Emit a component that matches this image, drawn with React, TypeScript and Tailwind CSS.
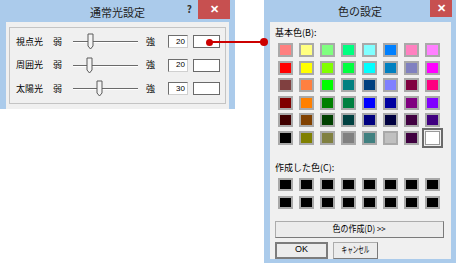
import React from "react";

const jp = { fontFamily: '"Noto Sans CJK JP", "Noto Sans", sans-serif' };

const basicColors = [
  "#ff8080", "#ffff80", "#80ff80", "#00ff80", "#80ffff", "#0080ff", "#ff80c0", "#ff80ff",
  "#ff0000", "#ffff00", "#80ff00", "#00ff40", "#00ffff", "#0080c0", "#8080c0", "#ff00ff",
  "#804040", "#ff8040", "#00ff00", "#008080", "#004080", "#8080ff", "#800040", "#ff0080",
  "#800000", "#ff8000", "#008000", "#008040", "#0000ff", "#0000a0", "#800080", "#8000ff",
  "#400000", "#804000", "#004000", "#004040", "#000080", "#000040", "#400040", "#400080",
  "#000000", "#808000", "#808040", "#808080", "#408080", "#c0c0c0", "#400040", "#ffffff",
];

const lights = [
  { label: "視点光", value: 20, pos: 15 },
  { label: "周囲光", value: 20, pos: 14 },
  { label: "太陽光", value: 30, pos: 24 },
];

function Slider({ pos }: { pos: number }) {
  return (
    <svg width="65" height="17" viewBox="0 0 65 17">
      <line x1="0" y1="8.5" x2="65" y2="8.5" stroke="#6a6a6a" strokeWidth="1" />
      <line x1="0" y1="9.5" x2="65" y2="9.5" stroke="#ffffff" strokeWidth="1" />
      <polygon
        points={`${pos},1 ${pos + 5},1 ${pos + 5},13 ${pos + 2.5},16 ${pos},13`}
        fill="#f4f4f4"
        stroke="#5a5a5a"
        strokeWidth="1"
      />
    </svg>
  );
}

function CloseButton({ w, h }: { w: string; h: string }) {
  return (
    <div className={`${w} ${h} bg-[#c75050] flex items-center justify-center text-white text-[11px] font-bold`}>
      ✕
    </div>
  );
}

function LightDialog() {
  return (
    <div className="w-[235px] h-[109px] bg-[#abcbeb] flex flex-col">
      <div className="h-[22px] relative flex items-center justify-center shrink-0">
        <span className="text-[11px] text-[#222] pt-[3px]" style={jp}>通常光設定</span>
        <div className="absolute right-[5px] top-0 flex items-start">
          <span className="text-[10px] font-bold text-[#333] mr-[6px] mt-[1px]" style={jp}>?</span>
          <CloseButton w="w-[32px]" h="h-[19px]" />
        </div>
      </div>
      <div className="flex-1 mx-[6px] bg-[#f0f0f0] pt-[5px] px-[3px]">
        <div className="h-[77px] border border-[#c4c4c4] pt-[7px] pl-[6px] flex flex-col gap-[10.5px]">
          {lights.map((l) => (
            <div key={l.label} className="h-[13px] flex items-center text-[9px] text-black" style={jp}>
              <span className="w-[37px]">{l.label}</span>
              <span className="w-[20px]">弱</span>
              <div className="w-[65px] h-[17px] flex items-center">
                <Slider pos={l.pos} />
              </div>
              <span className="w-[22px] ml-[8px]">強</span>
              <div
                className="w-[20px] h-[13px] bg-white border border-[#6e6e6e] border-b-[#d0d0d0] border-r-[#d0d0d0] flex items-center justify-end pr-[2px] text-[8px]"
                style={{ fontFamily: '"Liberation Sans", sans-serif' }}
              >
                {l.value}
              </div>
              <div className="w-[27px] h-[13px] ml-[5px] bg-white border border-[#6a6a6a]" />
            </div>
          ))}
        </div>
      </div>
    </div>
  );
}

function ColorDialog() {
  return (
    <div className="w-[192px] h-[263px] ml-[29px] bg-[#abcbeb] flex flex-col">
      <div className="h-[22px] relative flex items-center justify-center shrink-0">
        <span className="text-[11px] text-[#222] pt-[1px]" style={jp}>色の設定</span>
        <div className="absolute right-[4px] top-0">
          <CloseButton w="w-[22px]" h="h-[17px]" />
        </div>
      </div>
      <div className="flex-1 ml-[6px] mr-[5px] mb-[5px] bg-[#f0f0f0] pt-[5px] pl-[5px] text-[9px] text-black" style={jp}>
        <div className="h-[12px] leading-[12px]">基本色(B):</div>
        <div className="ml-[3px] mt-[4px] grid grid-cols-[repeat(8,15px)] gap-x-[6px] gap-y-[3.5px]">
          {basicColors.map((c, i) => (
            <div
              key={i}
              className={
                i === 47
                  ? "w-[15px] h-[14px] border border-[#9a9a9a] outline-2 outline-offset-1 outline-[#6a6a6a]"
                  : "w-[15px] h-[14px] border-2 border-[#a9a9a9]"
              }
              style={{ backgroundColor: c }}
            />
          ))}
        </div>
        <div className="h-[12px] leading-[12px] mt-[17px]">作成した色(C):</div>
        <div className="ml-[3px] mt-[4px] grid grid-cols-[repeat(8,15px)] gap-x-[6px] gap-y-[5px]">
          {Array.from({ length: 16 }).map((_, i) => (
            <div key={i} className="w-[15px] h-[13px] bg-black border-2 border-[#a9a9a9]" />
          ))}
        </div>
        <div className="w-[169px] h-[17px] mt-[12px] bg-[#ececec] border border-[#acacac] border-b-[#7a7a7a] border-r-[#7a7a7a] flex items-center justify-center whitespace-nowrap">
          <span className="inline-block scale-x-[0.88]">色の作成(D) &gt;&gt;</span>
        </div>
        <div className="flex gap-[5px] mt-[4px]">
          <div
            className="w-[53px] h-[17px] bg-[#ececec] border-2 border-[#7c7c7c] flex items-center justify-center"
            style={{ fontFamily: '"Liberation Sans", sans-serif' }}
          >
            OK
          </div>
          <div className="w-[45px] h-[17px] bg-[#ececec] border border-[#acacac] border-b-[#7a7a7a] border-r-[#7a7a7a] flex items-center justify-center whitespace-nowrap overflow-hidden">
            <span className="inline-block scale-x-[0.62]">キャンセル</span>
          </div>
        </div>
      </div>
    </div>
  );
}

export default function App() {
  return (
    <div className="relative w-[457px] h-[270px] bg-white overflow-hidden flex items-start">
      <LightDialog />
      <ColorDialog />
      {/* red leader line linking the colour box to the colour dialog */}
      <div className="absolute left-[209px] top-[41px] w-[55px] h-[2px] bg-[#cc0000]" />
      <div className="absolute left-[206px] top-[39px] w-[7px] h-[7px] rounded-full bg-[#cc0000]" />
      <div className="absolute left-[260px] top-[38px] w-[8px] h-[8px] rounded-full bg-[#cc0000]" />
    </div>
  );
}
